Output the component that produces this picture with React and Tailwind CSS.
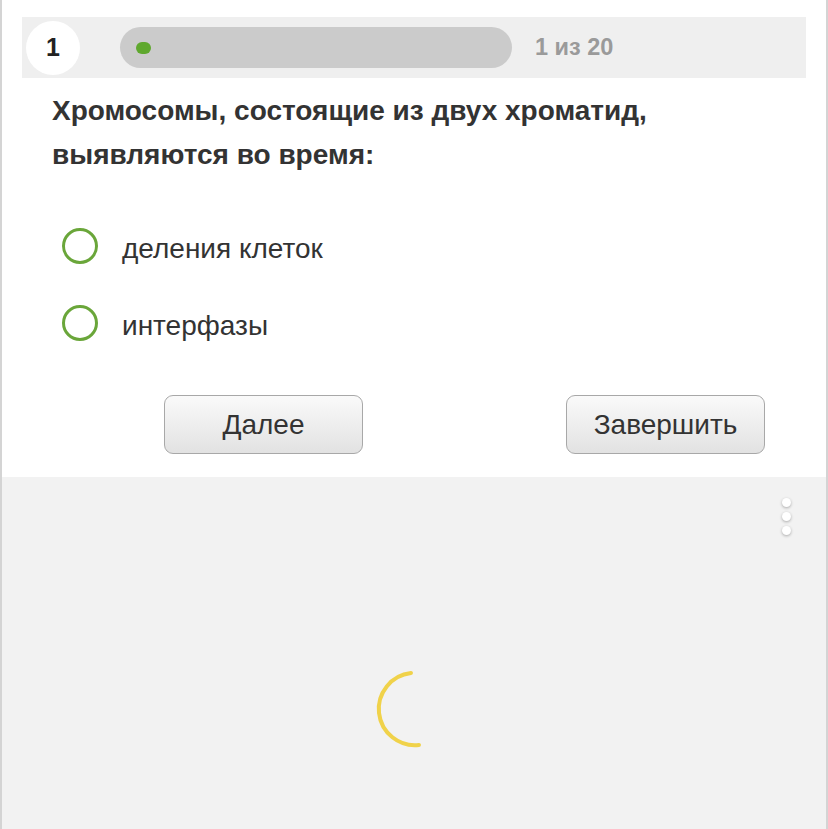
export default function App() {
  return (
    <div className="w-[828px] h-[829px] flex flex-col border-x-2 border-[#d4d4d4] bg-[#f2f2f2] overflow-hidden" style={{ fontFamily: '"Liberation Sans", Arial, sans-serif' }}>
      <div className="bg-white h-[477px] shrink-0 pt-[17px] px-[20px]">
        <div className="h-[61px] bg-[#efefef] flex items-center pl-[4px]">
          <div className="w-[54px] h-[54px] rounded-full bg-white flex items-center justify-center text-[25px] font-bold text-[#222]">1</div>
          <div className="ml-[40px] w-[392px] h-[41px] rounded-full bg-[#cbcbcb] flex items-center pl-[16px]">
            <div className="w-[15px] h-[12px] rounded-full bg-[#5fa82e]"></div>
          </div>
          <div className="ml-[23px] text-[23.5px] font-bold text-[#9a9a9a]">1 из 20</div>
        </div>
        <div className="pl-[30px] pt-[11px] text-[28px] font-bold text-[#333] leading-[44px]">
          Хромосомы, состоящие из двух хроматид,<br />выявляются во время:
        </div>
        <div className="mt-[51px] pl-[40px] flex flex-col gap-[41px]">
          <div className="flex items-center h-[36px]">
            <div className="w-[36px] h-[36px] rounded-full border-[3px] border-[#6aa63a]"></div>
            <div className="ml-[24px] mt-[6px] text-[28px] text-[#333]">деления клеток</div>
          </div>
          <div className="flex items-center h-[36px]">
            <div className="w-[36px] h-[36px] rounded-full border-[3px] border-[#6aa63a]"></div>
            <div className="ml-[24px] mt-[6px] text-[28px] text-[#333]">интерфазы</div>
          </div>
        </div>
        <div className="mt-[54px] flex pl-[142px]">
          <button className="w-[199px] h-[59px] rounded-[9px] border border-[#a8a8a8] bg-gradient-to-b from-[#fafafa] to-[#e2e2e2] text-[28px] text-[#333]">Далее</button>
          <button className="ml-[203px] w-[199px] h-[59px] rounded-[9px] border border-[#a8a8a8] bg-gradient-to-b from-[#fafafa] to-[#e2e2e2] text-[28px] text-[#333]">Завершить</button>
        </div>
      </div>
      <div className="relative flex-1">
        <div className="absolute left-[780px] top-[21px] flex flex-col gap-[5px]">
          <div className="w-[9px] h-[9px] rounded-full bg-white shadow-[0_1px_3px_rgba(0,0,0,0.3)]"></div>
          <div className="w-[9px] h-[9px] rounded-full bg-white shadow-[0_1px_3px_rgba(0,0,0,0.3)]"></div>
          <div className="w-[9px] h-[9px] rounded-full bg-white shadow-[0_1px_3px_rgba(0,0,0,0.3)]"></div>
        </div>
        <svg className="absolute left-[372px] top-[192px]" width="60" height="80" viewBox="0 0 60 80">
          <path d="M37 4 A36 36 0 0 0 45 76" fill="none" stroke="#f0d24a" strokeWidth="4" strokeLinecap="round" />
        </svg>
      </div>
    </div>
  );
}
